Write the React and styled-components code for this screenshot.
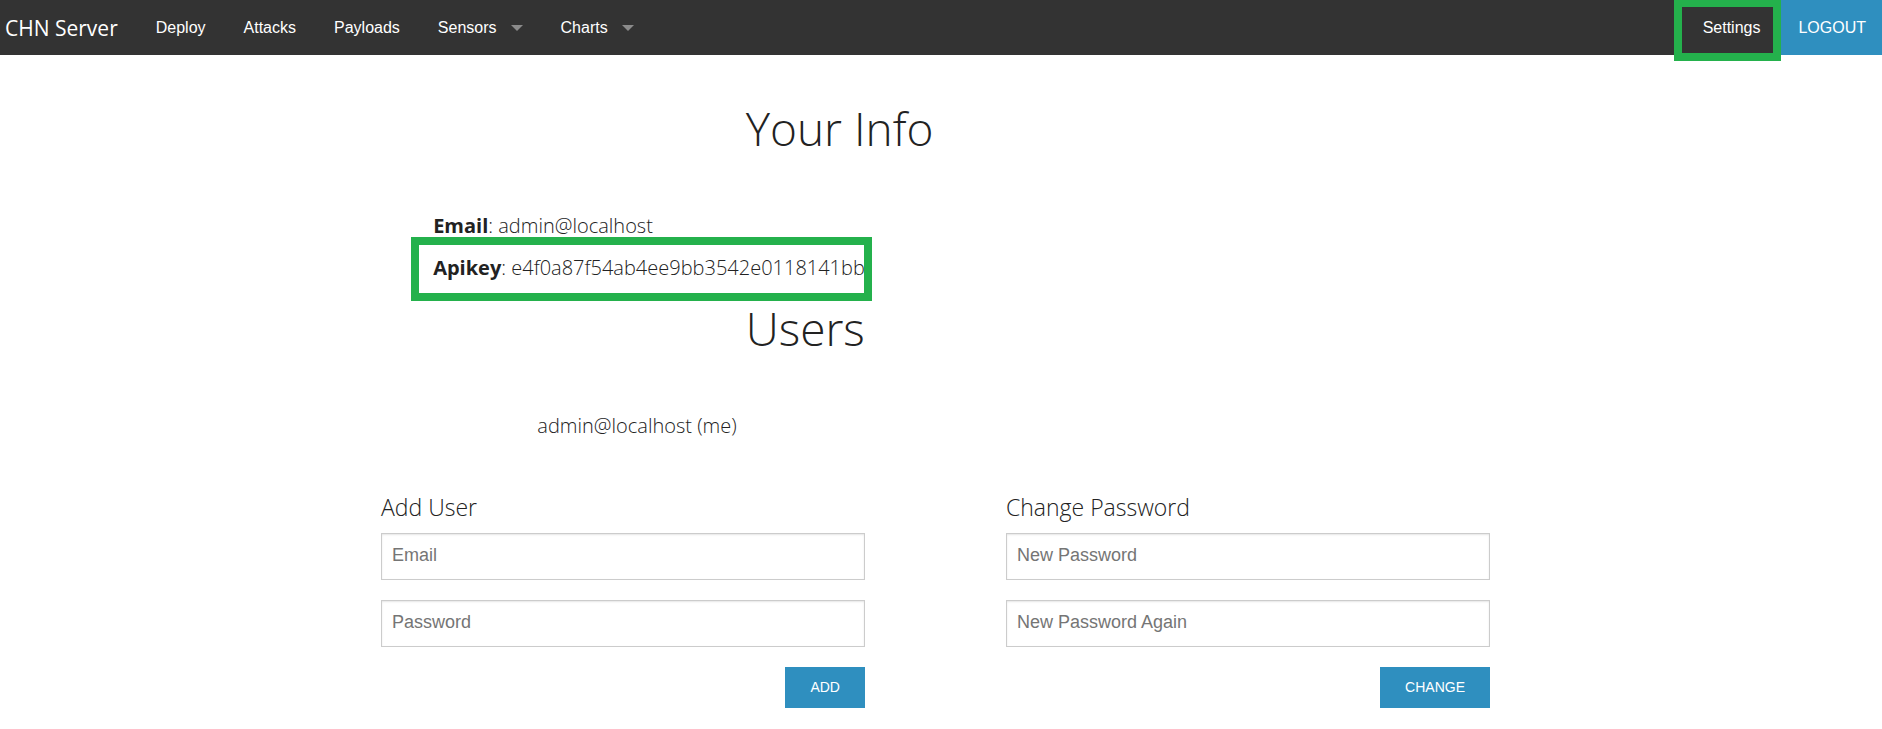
import React from "react";
import styled, { createGlobalStyle, css } from "styled-components";

const sans = `"Liberation Sans", Arial, sans-serif`;
const openSans = `"Open Sans", "Noto Sans", sans-serif`;
const blue = "#2f8fbf";
const green = "#24b14c";

const GlobalStyle = createGlobalStyle`
  *, *::before, *::after { box-sizing: border-box; }
  body {
    margin: 0;
    background: #fff;
    color: #222;
    font-family: ${openSans};
    font-size: 20px;
    font-weight: 300;
    line-height: 32px;
  }
`;

const TopBar = styled.header`
  display: flex;
  justify-content: space-between;
  height: 55px;
  background: #333;
`;

const BarSide = styled.nav`
  display: flex;
  align-items: stretch;
`;

const Brand = styled.a`
  display: flex;
  align-items: center;
  padding: 0 19px 0 5px;
  color: #fff;
  font-size: 21px;
  font-weight: 400;
  text-decoration: none;
  white-space: nowrap;
`;

const NavLink = styled.a`
  position: relative;
  display: flex;
  align-items: center;
  gap: 14px;
  padding: 0 19px;
  color: #fff;
  font-family: ${sans};
  font-size: 16px;
  font-weight: 400;
  text-decoration: none;
  white-space: nowrap;

  ${({ $dropdown }) => $dropdown && css`
    &::after {
      content: "";
      border: 6px solid transparent;
      border-top-color: #8b8b8b;
      border-bottom-width: 0;
    }
  `}
`;

const SettingsLink = styled(NavLink)`
  padding: 0 21px;
`;

const LogoutLink = styled(NavLink)`
  padding: 0 16px 0 17px;
  background: ${blue};
`;

const Marker = styled.span`
  position: absolute;
  inset: ${({ $inset }) => $inset};
  border: 8px solid ${green};
  pointer-events: none;
`;

const Page = styled.main`
  display: grid;
  grid-template-columns: repeat(12, 1fr);
  max-width: 1250px;
  margin: 0 auto;
  padding-top: 41px;
`;

const Heading = styled.h2`
  grid-column: 5 / -1;
  margin: 0;
  padding-left: 13px;
  font-size: 46px;
  font-weight: 300;
  line-height: 64px;
`;

const InfoList = styled.dl`
  grid-column: 2 / -1;
  justify-self: start;
  margin: 0;
  padding: 45px 0 7px 13px;
`;

const InfoRow = styled.div`
  position: relative;
  display: flex;
  height: 42px;
  padding-top: 5px;

  dt { font-weight: 700; }
  dd { margin: 0; white-space: pre; }
`;

const UserList = styled.ul`
  grid-column: 3 / -1;
  margin: 0;
  padding: 50px 0 48px 13px;
  list-style: none;
`;

const FormPanel = styled.form`
  grid-column: span 6;
  display: flex;
  flex-direction: column;
  gap: 20px;
  padding: 0 76px 21px 65px;
`;

const FormTitle = styled.h4`
  margin: 0 0 -11px;
  font-size: 23px;
  font-weight: 300;
  line-height: 34px;
`;

const Field = styled.input`
  width: 100%;
  height: 47px;
  padding: 0 10px 2px;
  border: 1px solid #ccc;
  border-radius: 0;
  background: #fff;
  box-shadow: inset 0 1px 2px rgba(0, 0, 0, 0.1);
  color: #444;
  font-family: ${sans};
  font-size: 18px;

  &::placeholder { color: #757575; opacity: 1; }
`;

const SubmitButton = styled.button`
  align-self: flex-end;
  height: 41px;
  padding: 0 25px 2px;
  border: 0;
  background: ${blue};
  color: #fff;
  font-family: ${sans};
  font-size: 14px;
  cursor: pointer;
`;

const links = [
  { label: "Deploy" },
  { label: "Attacks" },
  { label: "Payloads" },
  { label: "Sensors", dropdown: true },
  { label: "Charts", dropdown: true },
];

function AccountForm({ title, fields, action }) {
  return (
    <FormPanel aria-label={title} onSubmit={(e) => e.preventDefault()}>
      <FormTitle>{title}</FormTitle>
      {fields.map(({ label, type }) => (
        <Field key={label} type={type} placeholder={label} aria-label={label} />
      ))}
      <SubmitButton type="submit">{action}</SubmitButton>
    </FormPanel>
  );
}

export default function App() {
  return (
    <>
      <GlobalStyle />
      <TopBar>
        <BarSide aria-label="Main">
          <Brand href="#">CHN Server</Brand>
          {links.map(({ label, dropdown }) => (
            <NavLink key={label} href="#" $dropdown={dropdown}>{label}</NavLink>
          ))}
        </BarSide>
        <BarSide aria-label="Account">
          <SettingsLink href="#">
            Settings
            <Marker $inset="-1px 0 -6px -8px" />
          </SettingsLink>
          <LogoutLink href="#">LOGOUT</LogoutLink>
        </BarSide>
      </TopBar>
      <Page>
        <Heading>Your Info</Heading>
        <InfoList>
          <InfoRow>
            <dt>Email</dt>
            <dd>: admin@localhost</dd>
          </InfoRow>
          <InfoRow>
            <dt>Apikey</dt>
            <dd>: e4f0a87f54ab4ee9bb3542e0118141bb</dd>
            <Marker $inset="-10px -7px -12px -22px" />
          </InfoRow>
        </InfoList>
        <Heading>Users</Heading>
        <UserList>
          <li>admin@localhost (me)</li>
        </UserList>
        <AccountForm
          title="Add User"
          action="ADD"
          fields={[
            { label: "Email", type: "email" },
            { label: "Password", type: "password" },
          ]}
        />
        <AccountForm
          title="Change Password"
          action="CHANGE"
          fields={[
            { label: "New Password", type: "password" },
            { label: "New Password Again", type: "password" },
          ]}
        />
      </Page>
    </>
  );
}
